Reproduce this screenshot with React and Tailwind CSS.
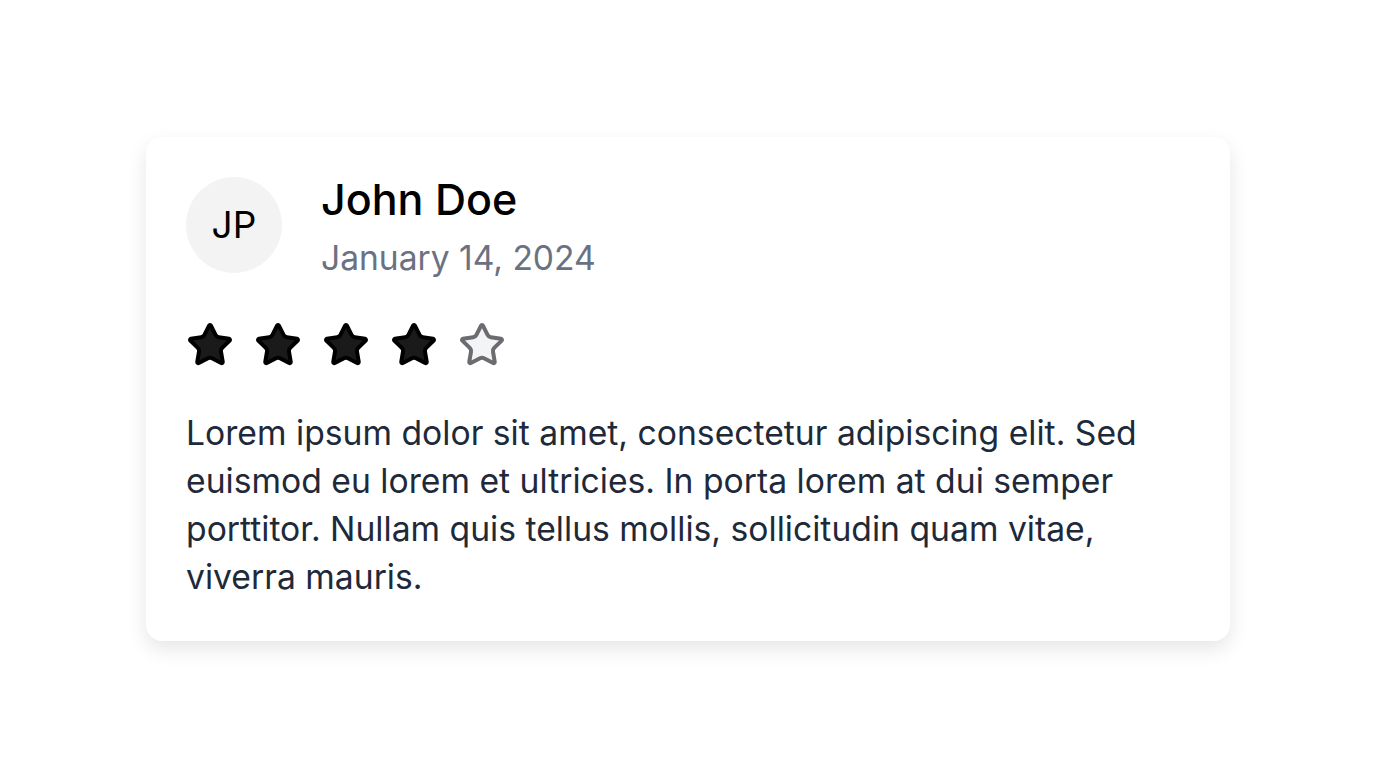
import { Star } from 'lucide-react';

const RATING = 4;

export default function App() {
  return (
    <div className="min-h-screen bg-white flex justify-center pt-[137px]" style={{ fontFamily: 'Inter, "Noto Sans", sans-serif' }}>
      <div className="w-[1084px] h-fit bg-white rounded-2xl shadow-[0_8px_20px_rgba(0,0,0,0.1)] p-10">
        {/* header */}
        <div className="flex items-start gap-[39px]">
          <div className="w-24 h-24 shrink-0 rounded-full bg-[#f3f3f3] flex items-center justify-center text-[37px] text-black">
            JP
          </div>
          <div className="flex flex-col">
            <h2 className="text-[43px] leading-[44px] font-medium text-black">John Doe</h2>
            <p className="mt-[11px] text-[33.6px] leading-[52px] text-gray-500">January 14, 2024</p>
          </div>
        </div>

        {/* stars */}
        <div className="flex gap-5 mt-[37px]">
          {[1, 2, 3, 4, 5].map(i => (
            <Star
              key={i}
              size={48}
              strokeWidth={2}
              className={i <= RATING ? 'fill-[#1a1a1a] text-black' : 'fill-gray-100 text-[#6b6b70]'}
            />
          ))}
        </div>

        <p className="mt-10 text-[33.7px] leading-[48px] text-gray-800">
          Lorem ipsum dolor sit amet, consectetur adipiscing elit. Sed euismod eu lorem et ultricies. In porta lorem at dui semper porttitor. Nullam quis tellus mollis, sollicitudin quam vitae, viverra mauris.
        </p>
      </div>
    </div>
  );
}
